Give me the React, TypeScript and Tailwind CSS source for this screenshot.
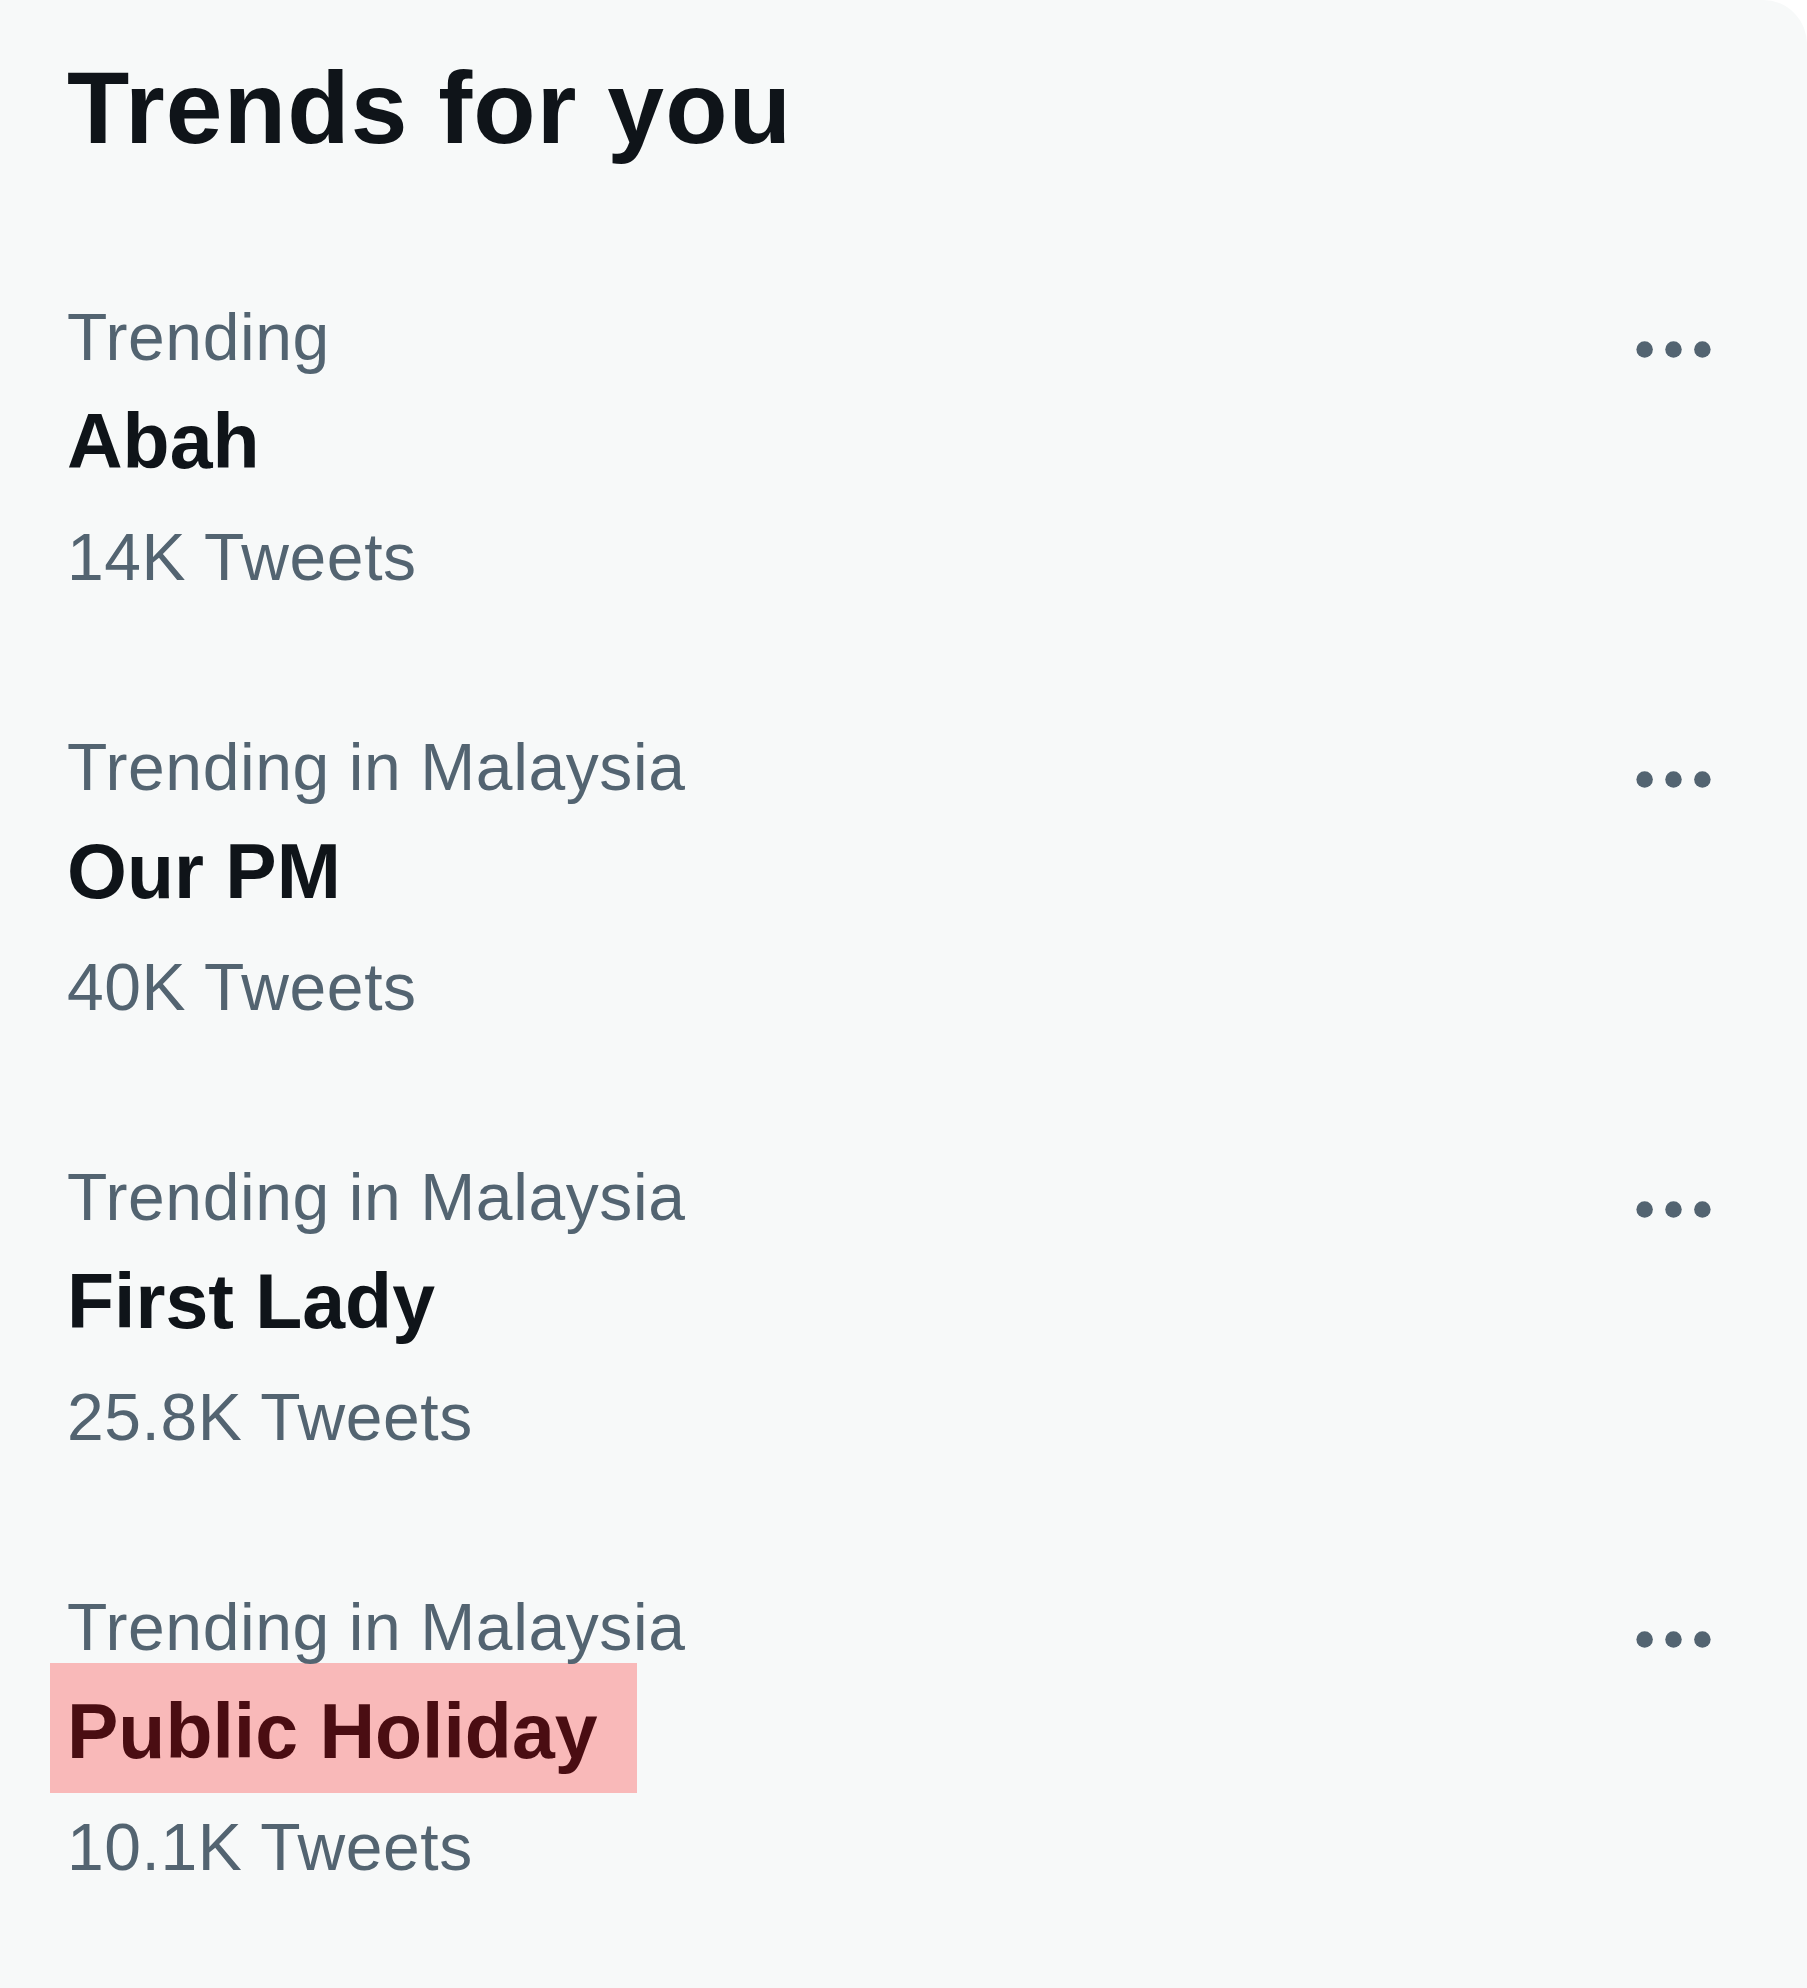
const trends = [
  { label: "Trending", title: "Abah", count: "14K Tweets" },
  { label: "Trending in Malaysia", title: "Our PM", count: "40K Tweets" },
  { label: "Trending in Malaysia", title: "First Lady", count: "25.8K Tweets" },
  { label: "Trending in Malaysia", title: "Public Holiday", count: "10.1K Tweets", marked: true },
];

const MoreIcon = () => (
  <svg viewBox="0 0 24 24" className="w-[99px] h-[99px] mt-[4px] shrink-0 fill-[#536471]">
    <circle cx="5" cy="12" r="2" />
    <circle cx="12" cy="12" r="2" />
    <circle cx="19" cy="12" r="2" />
  </svg>
);

const App = () => {
  return (
    <div className="min-h-screen bg-white">
      <section className="w-[1807px] h-[1988px] bg-[#f7f9f9] rounded-tr-[44px] font-['Liberation_Sans',Arial,sans-serif]">
        <h2 className="pt-[47px] pb-[63px] pl-[67px] text-[102px] leading-[122px] font-bold tracking-[1.2px] text-[#0f1419]">
          Trends for you
        </h2>

        <div>
          {trends.map((t) => (
            <div key={t.title} className="flex justify-between items-start py-[64px] pl-[67px] pr-[84px]">
              <div>
                <p className="text-[66px] leading-[82px] tracking-[0.6px] text-[#536471]">{t.label}</p>
                {t.marked ? (
                  <p className="-mt-[5px] -mb-[11px] pt-[17px] pb-[11px] -ml-[17px] pl-[17px] w-[587px] bg-[#f9b9b9] text-[77px] leading-[102px] font-bold text-[#4a0d12]">
                    {t.title}
                  </p>
                ) : (
                  <p className="mt-[12px] text-[77px] leading-[102px] font-bold text-[#0f1419]">
                    {t.title}
                  </p>
                )}
                <p className="mt-[24px] text-[66px] leading-[82px] tracking-[0.6px] text-[#536471]">{t.count}</p>
              </div>
              <MoreIcon />
            </div>
          ))}
        </div>
      </section>
    </div>
  );
};

export default App;
